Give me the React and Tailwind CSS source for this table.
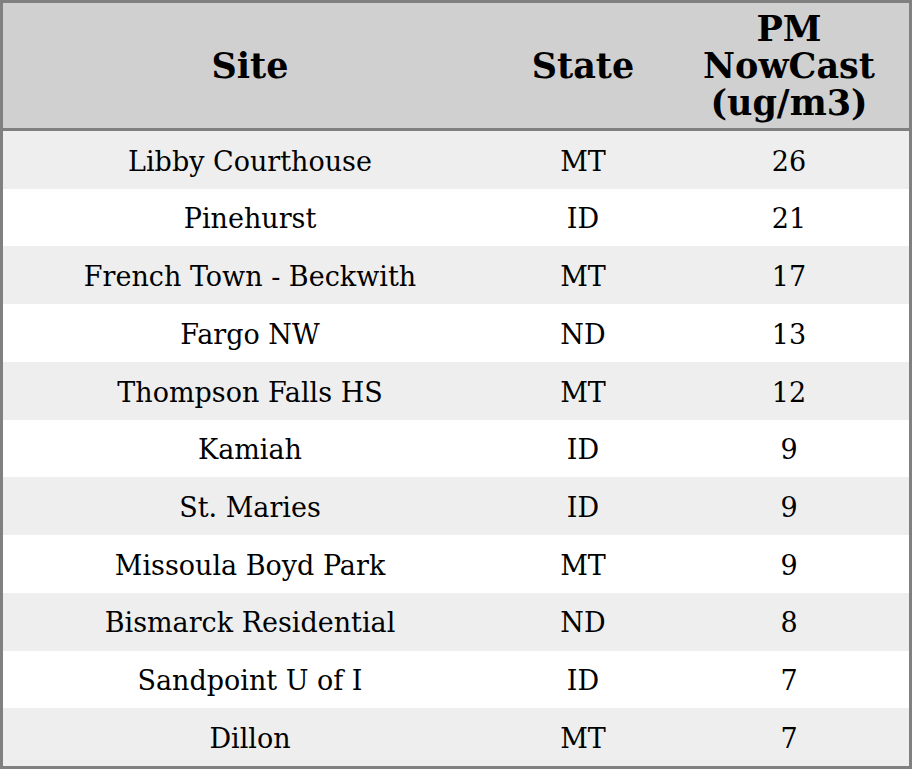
const rows = [
  ["Libby Courthouse", "MT", 26],
  ["Pinehurst", "ID", 21],
  ["French Town - Beckwith", "MT", 17],
  ["Fargo NW", "ND", 13],
  ["Thompson Falls HS", "MT", 12],
  ["Kamiah", "ID", 9],
  ["St. Maries", "ID", 9],
  ["Missoula Boyd Park", "MT", 9],
  ["Bismarck Residential", "ND", 8],
  ["Sandpoint U of I", "ID", 7],
  ["Dillon", "MT", 7],
];

// ─── Table ─────────────────────────────────────────────────────────────
export default function App() {
  return (
    <div className="w-[912px] h-[769px] border-[3px] border-[#808080] flex flex-col bg-white text-black font-['DejaVu_Serif',serif]">
      {/* HEADER */}
      <div className="h-[128px] shrink-0 grid grid-cols-[494px_172px_1fr] bg-[#d0d0d0] border-b-[3px] border-[#808080] text-[35px] font-bold leading-[37px]">
        <div className="flex items-center justify-center text-center">Site</div>
        <div className="flex items-center justify-center text-center">State</div>
        <div className="flex items-center justify-center text-center">
          PM
          <br />
          NowCast
          <br />
          (ug/m3)
        </div>
      </div>

      {/* BODY */}
      <div className="flex-1 flex flex-col text-[27px]">
        {rows.map(([site, state, pm], i) => (
          <div
            key={site}
            className={
              "flex-1 grid grid-cols-[494px_172px_1fr] items-center text-center pt-[4px] " +
              (i % 2 === 0 ? "bg-[#eeeeee]" : "bg-white")
            }
          >
            <div>{site}</div>
            <div>{state}</div>
            <div>{pm}</div>
          </div>
        ))}
      </div>
    </div>
  );
}
